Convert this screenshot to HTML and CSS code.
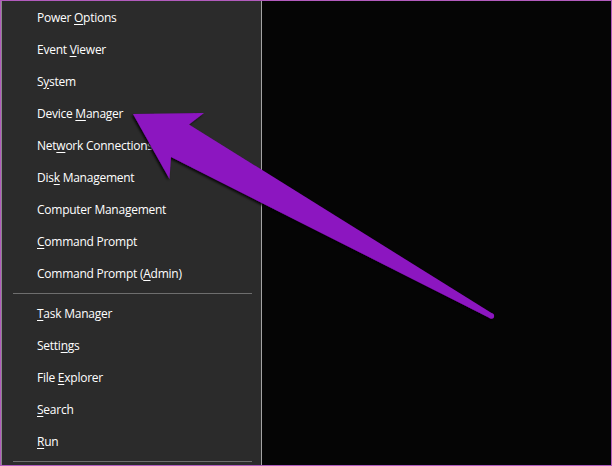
FILE: index.html
```html
<!DOCTYPE html>
<html>
<head>
<meta charset="utf-8">
<link rel="stylesheet" href="styles.css">
</head>
<body>
<div class="screen">
  <div class="menu">
    <div class="item"><span>Power <u>O</u>ptions</span></div>
    <div class="item"><span>Event <u>V</u>iewer</span></div>
    <div class="item"><span>S<u>y</u>stem</span></div>
    <div class="item"><span>Device <u>M</u>anager</span></div>
    <div class="item"><span>Net<u>w</u>ork Connections</span></div>
    <div class="item"><span>Dis<u>k</u> Management</span></div>
    <div class="item"><span>Computer Mana<u>g</u>ement</span></div>
    <div class="item"><span><u>C</u>ommand Prompt</span></div>
    <div class="item"><span>Command Prompt (<u>A</u>dmin)</span></div>
    <div class="sep"></div>
    <div class="item"><span><u>T</u>ask Manager</span></div>
    <div class="item"><span>Setti<u>n</u>gs</span></div>
    <div class="item"><span>File <u>E</u>xplorer</span></div>
    <div class="item"><span><u>S</u>earch</span></div>
    <div class="item"><span><u>R</u>un</span></div>
    <div class="sep"></div>
  </div>
  <div class="desktop"></div>
  <svg class="arrow" width="612" height="466" viewBox="0 0 612 466">
    <defs>
      <filter id="sh" x="-10%" y="-10%" width="120%" height="120%">
        <feDropShadow dx="-1.5" dy="1.5" stdDeviation="0.8" flood-color="#000" flood-opacity="0.85"/>
      </filter>
    </defs>
    <g filter="url(#sh)" fill="#8c14c0">
      <polygon points="133,114 204,113 189,124.5 492.8,313.7 490.2,318.3 171,157 169.5,179"/>
      <circle cx="491.5" cy="316" r="2.65"/>
    </g>
  </svg>
</div>
</body>
</html>
```
FILE: styles.css
```css
html, body {
  margin: 0;
  padding: 0;
  background: #050505;
}
.screen {
  position: relative;
  width: 610px;
  height: 464px;
  border: 1px solid #b25bbd;
  display: flex;
  background: #050505;
  overflow: hidden;
}
.menu {
  width: 259px;
  background: #2b2b2b;
  border-left: 1px solid #8a8a8a;
  border-right: 1px solid #a3a3a3;
  display: flex;
  flex-direction: column;
}
.item {
  height: 32px;
  display: flex;
  align-items: center;
  padding-left: 35px;
  padding-top: 1px;
  box-sizing: border-box;
  font-family: "Open Sans", "Noto Sans", sans-serif;
  font-size: 12px;
  letter-spacing: -0.25px;
  color: #ffffff;
  white-space: nowrap;
  flex: none;
}
.item u {
  text-decoration-thickness: 1px;
  text-underline-offset: 2px;
}
.sep {
  height: 1px;
  width: 239px;
  margin: 4px 0 3px 11px;
  background: #6e6e6e;
  flex: none;
}
.desktop {
  flex: 1;
  background: #050505;
}
.arrow {
  position: absolute;
  left: -1px;
  top: -1px;
}
```
